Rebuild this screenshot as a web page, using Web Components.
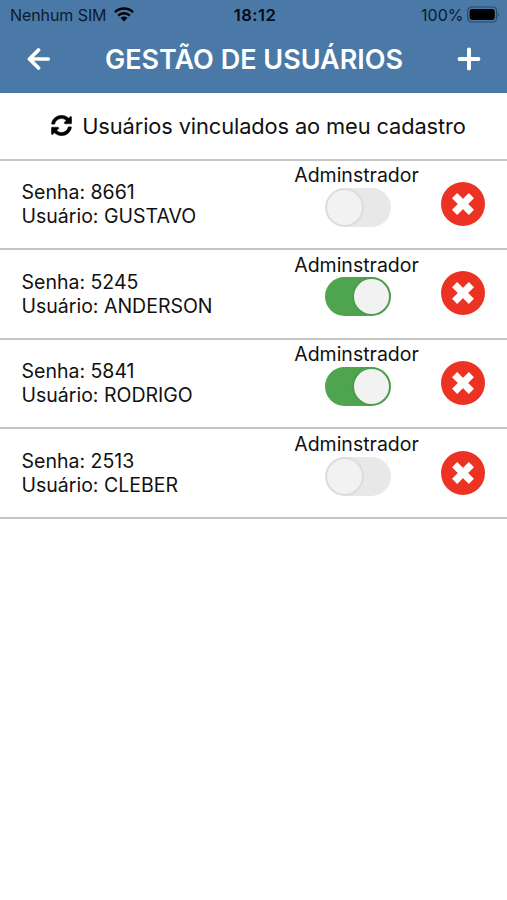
<!DOCTYPE html>
<html lang="pt-BR">
<head>
<meta charset="utf-8">
<title>Gestão de Usuários</title>
<style>
body{margin:0;background:#fff;color:#111;font-family:Inter,"Liberation Sans",sans-serif}
</style>
</head>
<body>
<users-app></users-app>
<script>
const define = (name, html, setup) => customElements.define(name, class extends HTMLElement {
  constructor() {
    super();
    this.attachShadow({mode: 'open'}).innerHTML = html;
  }
  connectedCallback() { if (setup) setup(this, this.shadowRoot); }
});

define('status-bar', `
<style>
:host{display:grid;grid-template-columns:1fr auto 1fr;align-items:center;height:30px;padding:0 7px 0 10px;box-sizing:border-box;font-size:16px;line-height:30px;color:#0c1a28}
div{display:flex;align-items:center}
.l{gap:7px}.r{justify-content:flex-end;gap:3.5px}
.c{font-weight:600;color:#060c13;font-size:16.6px;letter-spacing:.4px}
.sim{letter-spacing:-.08px}
svg{display:block}
.r svg,.l svg{margin-top:-1px}
</style>
<div class="l"><span class="sim">Nenhum SIM</span>
<svg width="20" height="15" viewBox="0 0 20 15"><g fill="none" stroke="#000" stroke-width="2.6"><path d="M1 5.2a12.8 12.8 0 0 1 18 0"/><path d="M4.2 8.6a8.2 8.2 0 0 1 11.6 0"/></g><path fill="#000" d="M6.6 11a4.8 4.8 0 0 1 6.8 0L10 14.4z"/></svg></div>
<div class="c">18:12</div>
<div class="r"><span class="pct">100%</span>
<svg width="33" height="17" viewBox="0 0 33 17"><rect x=".7" y="1" width="29" height="15" rx="4" fill="none" stroke="#2c4864" stroke-width="1.2"/><rect x="2.6" y="3" width="25.2" height="11" rx="2.4"/><path d="M31.2 6.2q1.8 2.3 0 4.6z" fill="#2c4864"/></svg></div>`);

define('title-bar', `
<style>
:host{display:flex;align-items:center;justify-content:space-between;height:62px;padding:0 26px 0 27px;box-sizing:border-box;color:#fff}
h1{margin:-2px 0 0;font-size:27px;font-weight:600;line-height:32px;white-space:nowrap}
svg{display:block;margin-top:-4px}
</style>
<svg width="24" height="24" viewBox="0 0 24 24" fill="none" stroke="#fff" stroke-width="3.7" stroke-linecap="round" stroke-linejoin="round"><path d="M21.2 12H3M11.5 3L2.5 12l9 9"/></svg>
<h1><slot></slot></h1>
<svg width="24" height="24" viewBox="0 0 24 24" fill="none" stroke="#fff" stroke-width="4" stroke-linecap="round"><path d="M12 2.6v18.8M2.6 12h18.8"/></svg>`);

define('section-heading', `
<style>
:host{display:flex;align-items:center;justify-content:center;gap:10px;height:66px;padding-left:10px;box-sizing:border-box;font-size:21.8px;line-height:28px;letter-spacing:-.1px;white-space:nowrap}
svg{display:block}
</style>
<svg width="21" height="21" viewBox="0 0 512 512"><path stroke="#000" stroke-width="10" d="M370.72 133.28C339.458 104.008 298.888 87.962 255.848 88c-77.458.068-144.328 53.178-162.791 126.85-1.344 5.363-6.122 9.15-11.651 9.15H24.103c-7.498 0-13.194-6.807-11.807-14.176C33.933 94.924 134.813 8 256 8c66.448 0 126.791 26.136 171.315 68.685L463.03 40.97C478.149 25.851 504 36.559 504 57.941V192c0 13.255-10.745 24-24 24H345.941c-21.382 0-32.09-25.851-16.971-40.971l41.75-41.749zM32 296h134.059c21.382 0 32.09 25.851 16.971 40.971l-41.75 41.75c31.262 29.273 71.835 45.319 114.876 45.28 77.418-.07 144.315-53.144 162.787-126.849 1.344-5.363 6.122-9.15 11.651-9.15h57.304c7.498 0 13.194 6.807 11.807 14.176C478.067 417.076 377.187 504 256 504c-66.448 0-126.791-26.136-171.315-68.685L48.97 471.03C33.851 486.149 8 475.441 8 454.059V320c0-13.255 10.745-24 24-24z"/></svg>
<span><slot></slot></span>`);

define('toggle-switch', `
<style>
:host{display:flex;align-items:center;width:66px;height:39px;padding:0 2px;box-sizing:border-box;border-radius:20px;background:#e8e8e8;overflow:hidden}
:host([on]){justify-content:flex-end;background:#4fa44f}
i{display:block;width:35px;height:35px;border-radius:50%;background:#f2f2f2;box-shadow:0 0 3px 1px rgba(0,0,0,.1)}
</style><i></i>`);

define('delete-button', `
<style>:host{display:block;width:44px;height:44px}svg{display:block}</style>
<svg width="44" height="44" viewBox="0 0 44 44"><circle cx="22" cy="22" r="22" fill="#eb3223"/><path d="M13.6 13.6L30.4 30.4M30.4 13.6L13.6 30.4" stroke="#fff" stroke-width="7.2"/></svg>`);

define('user-row', `
<style>
:host{display:grid;grid-template-columns:1fr 126px 87.5px;height:89.6px;box-sizing:border-box;border-top:2px solid #c6c6c6;font-size:19.5px;line-height:24.3px;white-space:nowrap}
.info{padding:19.5px 0 0 21.5px}
.admin{display:flex;flex-direction:column;align-items:center;padding-top:2.5px}
.admin toggle-switch{margin:.5px 0 0 2px}
.del{padding:21.3px 0 0 21.7px}
</style>
<div class="info"><div>Senha: <span id="s"></span></div><div>Usuário: <slot></slot></div></div>
<div class="admin"><span>Adminstrador</span><toggle-switch></toggle-switch></div>
<div class="del"><delete-button></delete-button></div>`, (host, root) => {
  root.getElementById('s').textContent = host.getAttribute('senha');
  root.querySelector('toggle-switch').toggleAttribute('on', host.hasAttribute('admin'));
});

define('users-app', `
<style>
:host{display:flex;flex-direction:column;min-height:900px;background:#fff}
header{background:#4a79a8;height:92.5px}
.list{border-bottom:2px solid #c6c6c6}
</style>
<header><status-bar></status-bar><title-bar>GESTÃO DE USUÁRIOS</title-bar></header>
<section-heading>Usuários vinculados ao meu cadastro</section-heading>
<div class="list">
<user-row senha="8661">GUSTAVO</user-row>
<user-row senha="5245" admin>ANDERSON</user-row>
<user-row senha="5841" admin>RODRIGO</user-row>
<user-row senha="2513">CLEBER</user-row>
</div>`);
</script>
</body>
</html>
